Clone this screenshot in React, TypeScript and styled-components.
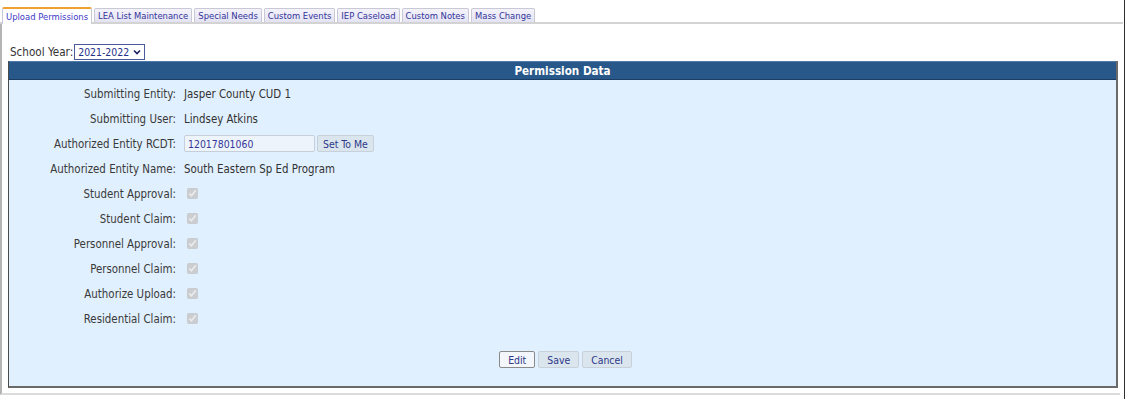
import React from 'react';
import styled, { createGlobalStyle } from 'styled-components';

const GlobalStyle = createGlobalStyle`
  html, body {
    margin: 0;
    padding: 0;
    background: #fff;
  }
  body {
    font-family: 'DejaVu Sans Condensed', 'Liberation Sans', sans-serif;
    color: #333;
  }
`;

const Page = styled.div`
  width: 1124px;
  height: 399px;
  border-right: 1px solid #2f2f2f;
  display: flex;
  flex-direction: column;
`;

const TabBar = styled.div`
  display: flex;
  align-items: flex-end;
  gap: 2px;
  height: 22px;
  padding-left: 2px;
  margin-right: 1px;
  border-bottom: 2px solid #d3d3d3;
`;

const Tab = styled.div<{ $active?: boolean }>`
  height: ${(p) => (p.$active ? '15px' : '13px')};
  padding: 0 3px;
  display: flex;
  align-items: center;
  font-size: 9.4px;
  color: ${(p) => (p.$active ? '#4038c8' : '#34349a')};
  background: ${(p) => (p.$active ? '#fff' : 'linear-gradient(#f4f3fb, #e4e3f3)')};
  border: 1px solid #c9c9d6;
  border-top: ${(p) => (p.$active ? '2px solid #f0a030' : '1px solid #c9c9d6')};
  border-bottom: none;
  border-radius: 2px 2px 0 0;
  margin-bottom: ${(p) => (p.$active ? '-2px' : '0')};
  white-space: nowrap;
`;

const Content = styled.div`
  flex: 1;
  margin-bottom: 4px;
  border-left: 2px solid #b4b4b4;
  border-bottom: 2px solid #dcdcdc;
  padding: 20px 4px 0 6px;
  margin-right: 4px;
`;

const YearRow = styled.div`
  display: flex;
  align-items: center;
  gap: 1px;
  font-size: 11.6px;
  color: #333;
  margin-left: 2px;
  height: 16px;
`;

const YearSelect = styled.div`
  display: flex;
  align-items: center;
  gap: 4px;
  height: 14px;
  padding: 0 3px;
  border: 1px solid #4a5a9a;
  font-size: 10.4px;
  color: #25308a;
  background: #fff;
`;

const Panel = styled.div`
  margin-top: 1px;
  width: 1107px;
  border-left: 1px solid #4a4a4a;
  border-right: 2px solid #6a6a6a;
  border-bottom: 2px solid #6a6a6a;
  background: #e1f0fe;
`;

const PanelHeader = styled.div`
  height: 17px;
  background: #285789;
  border-top: 1px solid #4f7bab;
  border-bottom: 1px solid #1c3d63;
  color: #fff;
  font-weight: bold;
  font-size: 11.6px;
  display: flex;
  align-items: center;
  justify-content: center;
`;

const PanelBody = styled.div`
  padding: 1px 0 0;
  height: 305px;
  display: flex;
  flex-direction: column;
`;

const Row = styled.div`
  display: grid;
  grid-template-columns: 167px 1fr;
  column-gap: 8px;
  align-items: center;
  height: 25px;
  font-size: 11.4px;
`;

const Label = styled.div`
  text-align: right;
  color: #3a3a3a;
`;

const Value = styled.div`
  display: flex;
  align-items: center;
  gap: 2px;
  color: #333;
`;

const TextInput = styled.div`
  width: 126px;
  height: 15px;
  padding-left: 3px;
  display: flex;
  align-items: center;
  border: 1px solid #c6cfd9;
  background: #eef4fb;
  font-size: 10.4px;
  color: #34349a;
  border-radius: 2px;
`;

const Button = styled.button<{ $primary?: boolean; $wide?: boolean }>`
  height: 17px;
  padding: 0 ${(p) => (p.$wide ? '8px' : '5px')};
  font-family: inherit;
  font-size: 10.4px;
  color: #2c3888;
  background: ${(p) => (p.$primary ? '#f3f6fa' : '#dbe5ee')};
  border: 1px solid ${(p) => (p.$primary ? '#8a8a8a' : '#c8d1da')};
  border-radius: 2px;
  cursor: pointer;
`;

const Check = styled.input`
  width: 11px;
  height: 11px;
  margin: 0 0 0 3px;
  accent-color: #c8c8c8;
`;

const Actions = styled.div`
  margin-top: auto;
  margin-bottom: 18px;
  padding-left: 6px;
  display: flex;
  justify-content: center;
  gap: 3px;
`;

const tabs = [
  'Upload Permissions',
  'LEA List Maintenance',
  'Special Needs',
  'Custom Events',
  'IEP Caseload',
  'Custom Notes',
  'Mass Change',
];

const flags = [
  'Student Approval:',
  'Student Claim:',
  'Personnel Approval:',
  'Personnel Claim:',
  'Authorize Upload:',
  'Residential Claim:',
];

export default function App() {
  return (
    <>
      <GlobalStyle />
      <Page>
        <TabBar>
          {tabs.map((t, i) => (
            <Tab key={t} $active={i === 0}>
              {t}
            </Tab>
          ))}
        </TabBar>
        <Content>
          <YearRow>
            School Year:
            <YearSelect>
              2021-2022
              <svg width="8" height="6" viewBox="0 0 8 6">
                <path d="M1 1.5 L4 4.5 L7 1.5" fill="none" stroke="#1a2060" strokeWidth="1.6" />
              </svg>
            </YearSelect>
          </YearRow>
          <Panel>
            <PanelHeader>Permission Data</PanelHeader>
            <PanelBody>
              <Row>
                <Label>Submitting Entity:</Label>
                <Value>Jasper County CUD 1</Value>
              </Row>
              <Row>
                <Label>Submitting User:</Label>
                <Value>Lindsey Atkins</Value>
              </Row>
              <Row>
                <Label>Authorized Entity RCDT:</Label>
                <Value>
                  <TextInput>12017801060</TextInput>
                  <Button>Set To Me</Button>
                </Value>
              </Row>
              <Row>
                <Label>Authorized Entity Name:</Label>
                <Value>South Eastern Sp Ed Program</Value>
              </Row>
              {flags.map((f) => (
                <Row key={f}>
                  <Label>{f}</Label>
                  <Value>
                    <Check type="checkbox" checked disabled readOnly />
                  </Value>
                </Row>
              ))}
              <Actions>
                <Button $primary $wide>Edit</Button>
                <Button $wide>Save</Button>
                <Button $wide>Cancel</Button>
              </Actions>
            </PanelBody>
          </Panel>
        </Content>
      </Page>
    </>
  );
}
